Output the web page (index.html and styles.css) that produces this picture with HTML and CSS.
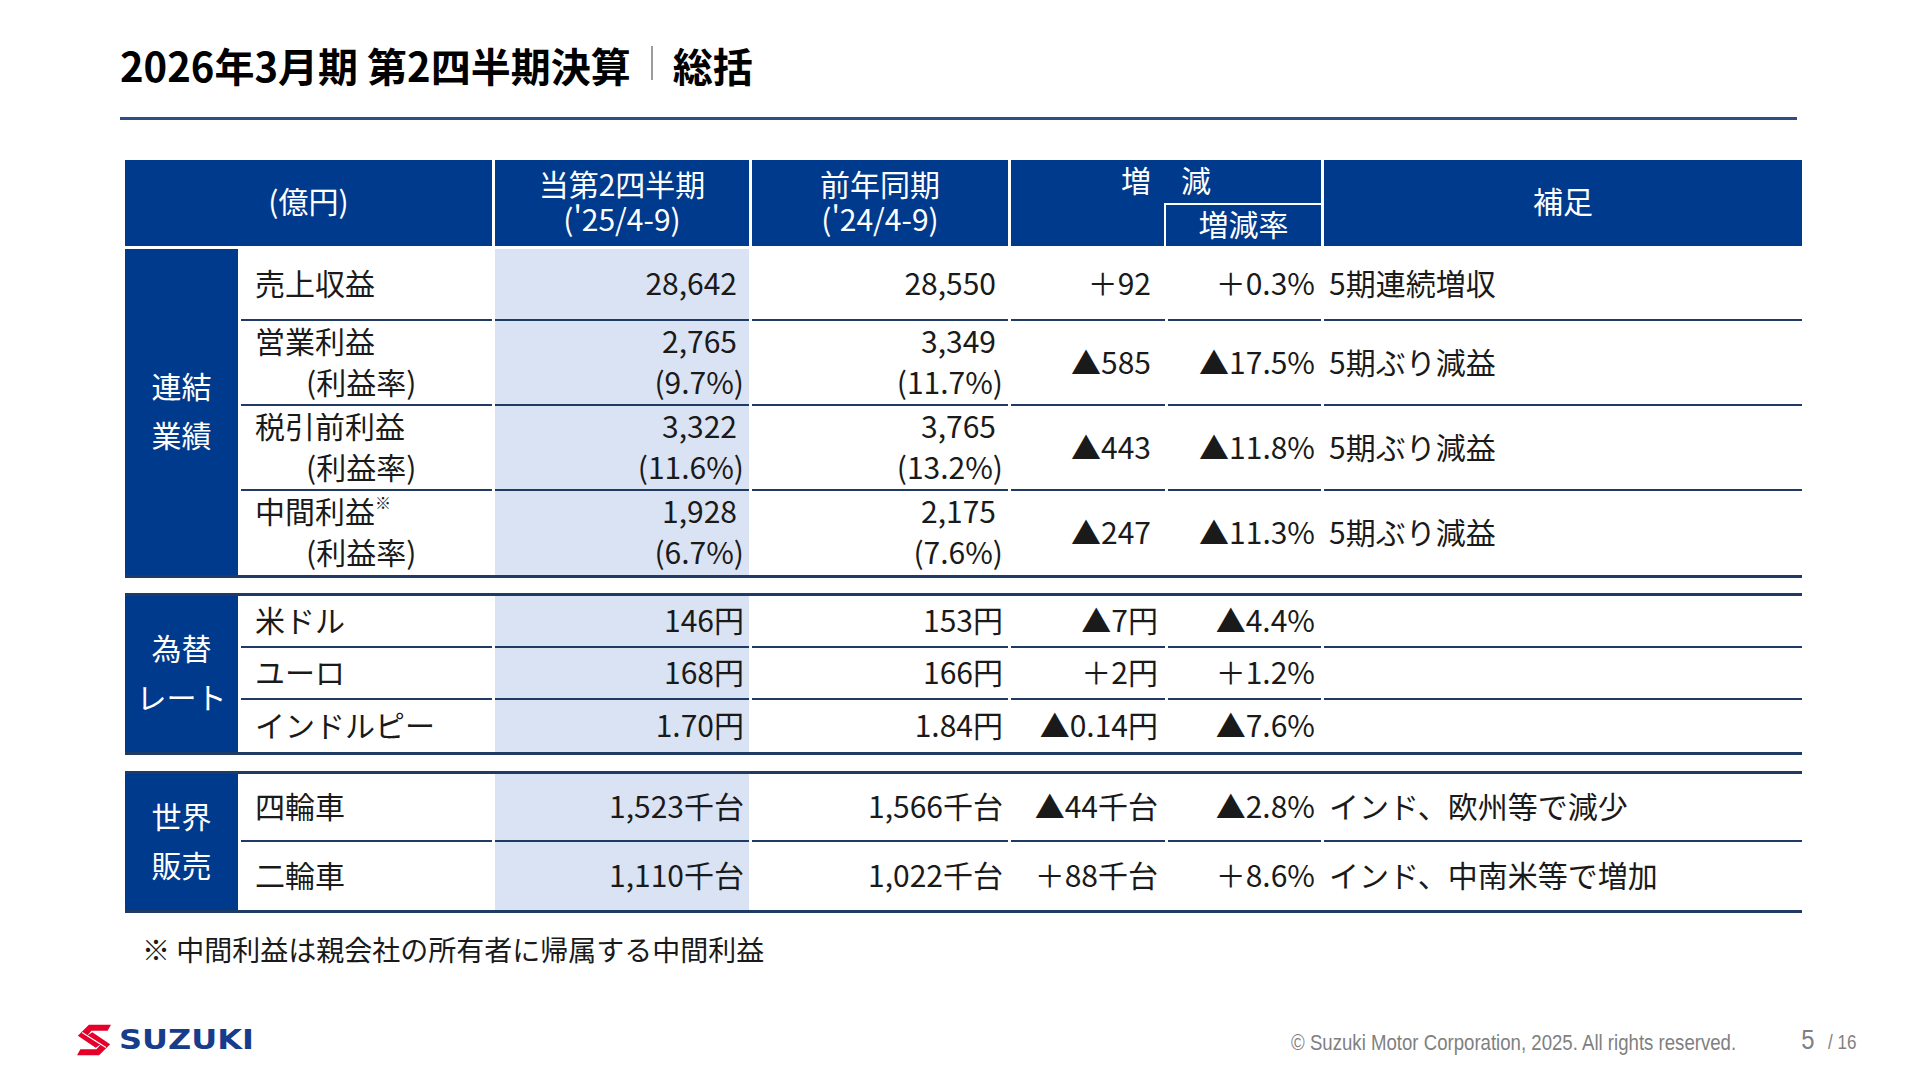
FILE: index.html
```html
<!DOCTYPE html>
<html lang="ja">
<head>
<meta charset="utf-8">
<title>2026年3月期 第2四半期決算 総括</title>
<link rel="stylesheet" href="styles.css">
</head>
<body>
<div class="slide">
  <h1 class="title">2026年3月期 第2四半期決算<span class="bar"></span>総括</h1>
  <div class="rule"></div>

  <div class="tbl">
    <div class="thead">
      <div class="th">(億円)</div>
      <div class="th two"><span>当第2四半期</span><span>('25/4-9)</span></div>
      <div class="th two"><span>前年同期</span><span>('24/4-9)</span></div>
      <div class="th diff">
        <div class="diff-top">増　減</div>
        <div class="diff-bottom"><div></div><div class="rate-box">増減率</div></div>
      </div>
      <div class="th">補足</div>
    </div>

    <div class="sec sec1">
      <div class="cat"><span>連結</span><span>業績</span></div>
      <div class="row">
        <div class="lbl">売上収益</div>
        <div class="val cur"><span class="n">28,642</span></div>
        <div class="val"><span class="n">28,550</span></div>
        <div class="val dif"><span class="n">＋92</span></div>
        <div class="val rate">＋0.3%</div>
        <div class="note">5期連続増収</div>
      </div>
      <div class="row">
        <div class="lbl two"><span>営業利益</span><span class="ind">(利益率)</span></div>
        <div class="val cur two"><span class="n">2,765</span><span>(9.7%)</span></div>
        <div class="val two"><span class="n">3,349</span><span>(11.7%)</span></div>
        <div class="val dif"><span class="n">▲585</span></div>
        <div class="val rate">▲17.5%</div>
        <div class="note">5期ぶり減益</div>
      </div>
      <div class="row">
        <div class="lbl two"><span>税引前利益</span><span class="ind">(利益率)</span></div>
        <div class="val cur two"><span class="n">3,322</span><span>(11.6%)</span></div>
        <div class="val two"><span class="n">3,765</span><span>(13.2%)</span></div>
        <div class="val dif"><span class="n">▲443</span></div>
        <div class="val rate">▲11.8%</div>
        <div class="note">5期ぶり減益</div>
      </div>
      <div class="row">
        <div class="lbl two"><span>中間利益<sup class="kome">※</sup></span><span class="ind">(利益率)</span></div>
        <div class="val cur two"><span class="n">1,928</span><span>(6.7%)</span></div>
        <div class="val two"><span class="n">2,175</span><span>(7.6%)</span></div>
        <div class="val dif"><span class="n">▲247</span></div>
        <div class="val rate">▲11.3%</div>
        <div class="note">5期ぶり減益</div>
      </div>
    </div>

    <div class="sec sec2">
      <div class="cat"><span>為替</span><span>レート</span></div>
      <div class="row">
        <div class="lbl">米ドル</div>
        <div class="val cur">146円</div>
        <div class="val">153円</div>
        <div class="val dif">▲7円</div>
        <div class="val rate">▲4.4%</div>
        <div class="note"></div>
      </div>
      <div class="row">
        <div class="lbl">ユーロ</div>
        <div class="val cur">168円</div>
        <div class="val">166円</div>
        <div class="val dif">＋2円</div>
        <div class="val rate">＋1.2%</div>
        <div class="note"></div>
      </div>
      <div class="row">
        <div class="lbl">インドルピー</div>
        <div class="val cur">1.70円</div>
        <div class="val">1.84円</div>
        <div class="val dif">▲0.14円</div>
        <div class="val rate">▲7.6%</div>
        <div class="note"></div>
      </div>
    </div>

    <div class="sec sec3">
      <div class="cat"><span>世界</span><span>販売</span></div>
      <div class="row">
        <div class="lbl">四輪車</div>
        <div class="val cur">1,523千台</div>
        <div class="val">1,566千台</div>
        <div class="val dif">▲44千台</div>
        <div class="val rate">▲2.8%</div>
        <div class="note">インド、欧州等で減少</div>
      </div>
      <div class="row">
        <div class="lbl">二輪車</div>
        <div class="val cur">1,110千台</div>
        <div class="val">1,022千台</div>
        <div class="val dif">＋88千台</div>
        <div class="val rate">＋8.6%</div>
        <div class="note">インド、中南米等で増加</div>
      </div>
    </div>
  </div>

  <p class="footnote">※ 中間利益は親会社の所有者に帰属する中間利益</p>

  <div class="footer">
    <div class="logo">
      <svg class="mark" viewBox="0 0 40 40" width="34" height="34" aria-hidden="true">
        <polygon fill="#e4002b" points="40,2 14,2 1,15 22,29 28,25 12,15 17,9 36,9"/>
        <polygon fill="#e4002b" points="0,38 26,38 39,25 18,11 12,15 28,25 23,31 4,31"/>
        <line x1="6" y1="11.3" x2="34" y2="28.8" stroke="#fff" stroke-width="1.4"/>
      </svg>
      <span class="word">SUZUKI</span>
    </div>
    <div class="copy">© Suzuki Motor Corporation, 2025. All rights reserved.</div>
    <div class="page"><span class="pno">5</span><span class="ptot">/ 16</span></div>
  </div>
</div>
</body>
</html>
```

FILE: styles.css
```css
html, body {
  margin: 0;
  padding: 0;
  background: #ffffff;
}

body {
  font-family: "Noto Sans CJK JP", "Noto Sans", sans-serif;
  color: #1a1a1a;
}

.slide {
  width: 1920px;
  height: 1080px;
  display: flex;
  flex-direction: column;
  overflow: hidden;
}

.title {
  margin: 41px 0 0 120px;
  font-size: 40px;
  font-weight: 700;
  line-height: 48px;
  height: 48px;
  color: #000;
  display: flex;
  align-items: center;
  white-space: nowrap;
}

.title .bar {
  display: inline-block;
  width: 2px;
  height: 34px;
  background: #9c9c9c;
  margin: 0 20px 0 20px;
  position: relative;
  top: -2px;
}

.rule {
  margin: 28px 0 0 120px;
  width: 1677px;
  height: 3px;
  background: #2d4f85;
}

/* table */
.tbl {
  margin: 40px 0 0 125px;
  width: 1677px;
  font-size: 30px;
}

.thead {
  display: grid;
  grid-template-columns: 367px 254px 256px 310px 478px;
  column-gap: 3px;
  height: 86px;
}

.th {
  background: #003a8c;
  color: #ffffff;
  display: flex;
  align-items: center;
  justify-content: center;
  line-height: 35px;
  padding-bottom: 5px;
  box-sizing: border-box;
}

.th.two {
  flex-direction: column;
}

.th.diff {
  flex-direction: column;
  align-items: stretch;
  justify-content: flex-start;
  padding-bottom: 0;
}

.diff-top {
  height: 43px;
  display: flex;
  align-items: center;
  justify-content: center;
  padding-bottom: 4px;
  box-sizing: border-box;
}

.diff-bottom {
  flex: 1;
  display: grid;
  grid-template-columns: 153px 157px;
}

.rate-box {
  border-left: 2px solid #ffffff;
  border-top: 2px solid #ffffff;
  display: flex;
  align-items: center;
  justify-content: center;
  padding-bottom: 4px;
}

.sec {
  display: grid;
  grid-template-columns: 113px 251px 254px 256px 154px 153px 478px;
  column-gap: 3px;
  border-bottom: 3px solid #1f3a63;
}

.sec1 {
  margin-top: 3px;
  grid-template-rows: 72px 85px 85px 84px;
}

.sec2 {
  margin-top: 15px;
  border-top: 3px solid #1f3a63;
  grid-template-rows: 52px 52px 52px;
}

.sec3 {
  margin-top: 16px;
  border-top: 3px solid #1f3a63;
  grid-template-rows: 68px 68px;
}

.cat {
  grid-column: 1;
  grid-row: 1 / -1;
  background: #003a8c;
  color: #ffffff;
  display: flex;
  flex-direction: column;
  align-items: center;
  justify-content: center;
  line-height: 49px;
  padding-bottom: 4px;
  box-sizing: border-box;
}

.row {
  display: contents;
}

.row > div {
  border-bottom: 2px solid #1f3a63;
  box-sizing: border-box;
  display: flex;
  align-items: center;
  white-space: nowrap;
  padding-bottom: 4px;
}

.row:last-child > div {
  border-bottom: none;
}

.lbl {
  padding-left: 14px;
}

.lbl.two,
.val.two {
  flex-direction: column;
  justify-content: center;
  line-height: 41px;
}

.lbl.two {
  align-items: flex-start;
}

.lbl .ind {
  margin-left: 51px;
}

.kome {
  font-size: 16px;
  vertical-align: 14px;
  line-height: 0;
}

.val {
  justify-content: flex-end;
  padding-right: 5px;
}

.val.two {
  align-items: flex-end;
}

.cur {
  background: #dae3f3;
}

.sec1 .val .n {
  margin-right: 7px;
}

.dif {
  padding-right: 7px;
}

.rate {
  padding-right: 6px;
}

.note {
  padding-left: 5px;
}

.footnote {
  margin: 16px 0 0 142px;
  font-size: 28px;
  line-height: 40px;
}

/* footer */
.footer {
  margin-top: auto;
  height: 50px;
  margin-bottom: 15px;
  display: flex;
  align-items: center;
  padding-left: 77px;
  padding-right: 59px;
}

.logo {
  display: flex;
  align-items: center;
  width: 200px;
}

.mark {
  display: block;
}

.word {
  margin-left: 8px;
  font-family: "DejaVu Sans", sans-serif;
  font-weight: 700;
  font-size: 26px;
  color: #173c8c;
  display: inline-block;
  transform: scaleX(1.23);
  transform-origin: left center;
}

.copy {
  margin-left: auto;
  margin-top: 6px;
  font-family: "Liberation Sans", sans-serif;
  font-size: 22px;
  color: #808080;
  white-space: nowrap;
  transform: scaleX(0.846);
  transform-origin: right center;
}

.page {
  margin-left: 64px;
  font-family: "Liberation Sans", sans-serif;
  color: #808080;
  display: flex;
  align-items: baseline;
}

.pno {
  font-size: 28px;
  display: inline-block;
  transform: scaleX(0.85);
}

.ptot {
  margin-left: 12px;
  font-size: 20px;
  display: inline-block;
  transform: scaleX(0.85);
  transform-origin: left center;
}
```
